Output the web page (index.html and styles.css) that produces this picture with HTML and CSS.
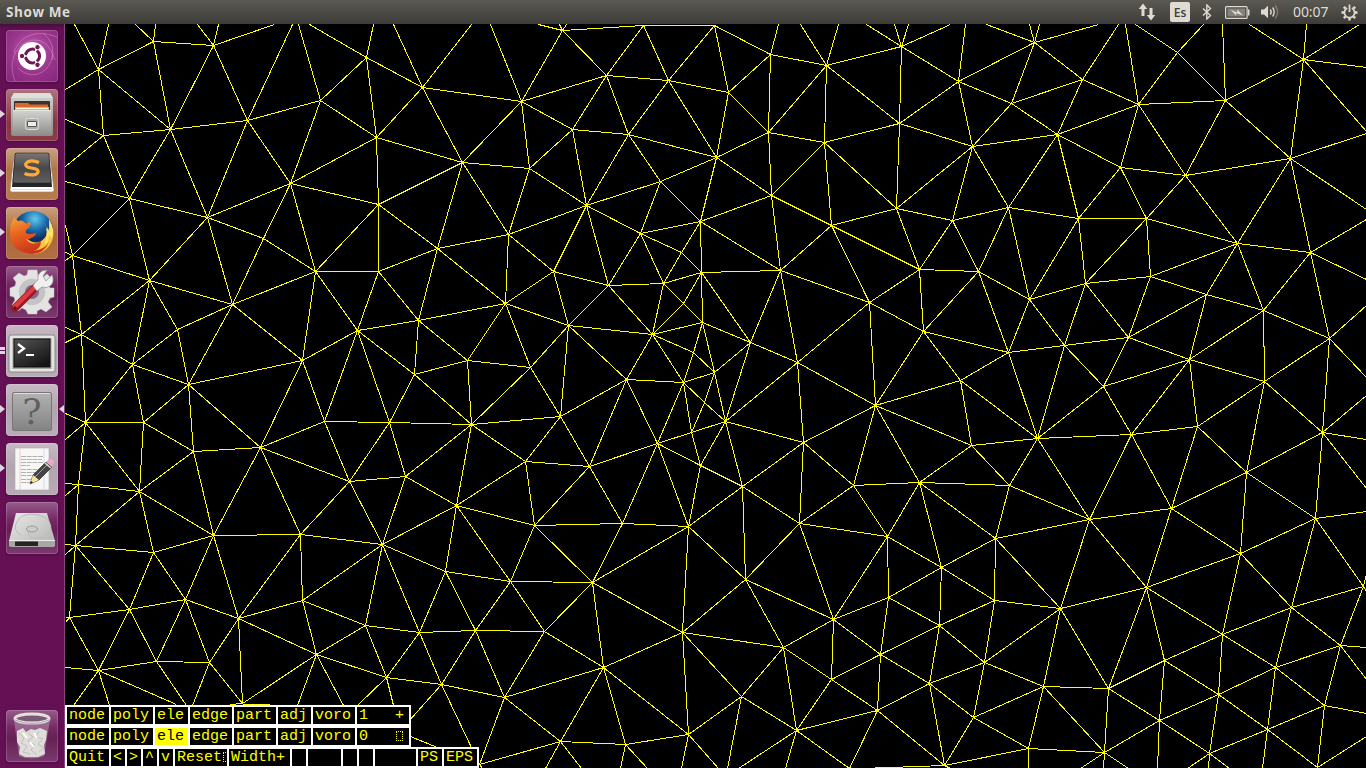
FILE: index.html
```html
<!DOCTYPE html>
<html lang="es">
<head>
<meta charset="utf-8">
<title>Show Me</title>
<link rel="stylesheet" href="styles.css">
</head>
<body>
<header class="panel">
  <span class="panel-title">Show Me</span>
  <div class="indicators">
    <svg class="ind-net" width="18" height="18" viewBox="0 0 18 18"><path d="M5 0.5L9.3 6H6.5V13H3.5V6H0.700Z M13 17.500L8.700 12H11.500V5H14.500V12H17.300Z"/></svg>
    <span class="ind-lang">Es</span>
    <svg class="ind-bt" width="10" height="16" viewBox="0 0 10 16"><path class="line" d="M1 4.500L8.500 11.500L4.800 15V1L8.500 4.500L1 11.500"/></svg>
    <svg class="ind-bat" width="25" height="13" viewBox="0 0 25 13"><rect class="bat-body" x=".6" y=".6" width="21.500" height="11.800" rx="1"/><rect class="bat-fill" x="2.500" y="2.500" width="17.700" height="8"/><path d="M23 3.500h1.500v6H23Z M5.500 3.500L12 6.500L12.500 3.500L18 9.500L11.500 7.200L11 9.500Z"/></svg>
    <svg class="ind-vol" width="20" height="16" viewBox="0 0 20 16"><path d="M1 5.500H4L8 1.800V14.200L4 10.500H1Z"/><path class="line" d="M10.300 5.500Q12 8 10.300 10.500M12.700 3.500Q15.700 8 12.700 12.500"/><path class="line faint" d="M15.300 1.500Q20 8 15.300 14.500"/></svg>
    <span class="clock">00:07</span>
    <svg class="ind-gear" width="17" height="17" viewBox="0 0 17 17"><path class="line ring" d="M6.200 4A5.100 5.100 0 1 0 10.800 4M8.500 .5V8"/><path class="line teeth" d="M2.800 2.800L4.400 4.400M14.200 2.800L12.600 4.400M.5 8.500H3M14 8.500H16.500M2.800 14.200L4.400 12.600M14.200 14.200L12.600 12.600M8.500 14V16.500"/></svg>
  </div>
</header>
<main class="desktop">
  <nav class="launcher">
    <div class="tile tile-dash">
      <svg width="52" height="52" viewBox="0 0 52 52"><path class="swirl" d="M9 51C2 33 8 14 27 10Q42 8 49 30M51 7C28-2 12 8 8 23M12 38C24 50 43 46 47 24M37 3Q50 13 46 30"/><circle cx="26" cy="26" r="14" fill="#fff"/><circle cx="26.500" cy="26" r="7" fill="none" stroke="#6f1653" stroke-width="3.200"/><path d="M26.500 26L14 26M26.500 26L33 15M26.500 26L33 37" stroke="#fff" stroke-width="1.500"/><circle cx="26.500" cy="26" r="5.200" fill="#fff"/><g fill="#6f1653" stroke="#fff"><circle cx="16" cy="26" r="2.700"/><circle cx="31.500" cy="17.200" r="2.700"/><circle cx="31.500" cy="34.800" r="2.700"/></g></svg>
    </div>
    <div class="tile tile-files running">
      <svg width="52" height="52" viewBox="0 0 52 52"><defs><linearGradient id="steel" x2="0" y2="1"><stop stop-color="#d4d4d1"/><stop offset="1" stop-color="#8b8b88"/></linearGradient></defs><path d="M8 4H44L47 9V45Q47 47 45 47H7Q5 47 5 45V9Z" fill="url(#steel)"/><path d="M8 4H44L47 9H5Z" fill="#dededb"/><rect x="8" y="12" width="36" height="12" rx="1" fill="#3b322d"/><path d="M9 14H22L24 15.500H42V23H9Z" fill="#d8672b"/><path d="M9 18H43V23H9Z" fill="#f2b168"/><path d="M10 19.500H42" stroke="#fff4d6"/><path d="M7 21H45V47H7Z" fill="url(#steel)"/><path d="M7 21.500H45" stroke="#e3e3df"/><rect x="19.500" y="29.500" width="13" height="11" rx="2" fill="#aaa" stroke="#ddd"/><rect x="21.500" y="32.500" width="9" height="5" rx=".5" fill="#eee" stroke="#555"/></svg>
    </div>
    <div class="tile tile-sublime running">
      <svg width="52" height="52" viewBox="0 0 52 52"><defs><linearGradient id="key" x2="0" y2="1"><stop stop-color="#777"/><stop offset=".5" stop-color="#484848"/><stop offset="1" stop-color="#606060"/></linearGradient></defs><path d="M8 8H44L48 42Q48 44 46 44H6Q4 44 4 42Z" fill="#fff" stroke="#9b8774" stroke-width=".7"/><path d="M9 5H43L46 39H6Z" fill="#252525"/><path d="M11 5H42Q43 5 43 7L45 33Q45 35 43 35H9Q7 35 7 33L9 7Q9 5 11 5Z" fill="url(#key)" stroke="#252525" stroke-width=".6"/><path d="M33 14.500Q26 11.500 21.500 14Q17.500 17 22 19.200L30 21Q34.500 23.500 30 26.200Q25 28 18.500 25.500" fill="none" stroke="#ffaa35" stroke-width="3.200"/><path d="M7 41.500H45" stroke="#ddd"/></svg>
    </div>
    <div class="tile tile-firefox running">
      <svg width="52" height="52" viewBox="0 0 52 52"><defs><radialGradient id="globe" cx=".55" cy=".2"><stop stop-color="#62c9ef"/><stop offset=".6" stop-color="#1766a5"/><stop offset="1" stop-color="#122d64"/></radialGradient><linearGradient id="fox" x2=".4" y2="1"><stop stop-color="#f5a737"/><stop offset=".45" stop-color="#e96420"/><stop offset="1" stop-color="#c9351b"/></linearGradient></defs><circle cx="27" cy="24" r="20" fill="url(#globe)"/><path d="M43 12Q50 24 46 34Q40 47 26 47Q13 47 7 36L20 31Q32 41 40 29Q43 20 38 16L43 23Z" fill="#f8c43c"/><path d="M8 10L12 14Q17 12 20 17Q23 14 25 16L23 21Q19 23 20 26Q23 28 30 26Q30 29 25 31Q23 33 20 32Q26 40 35 34Q35 42 27 44Q38 43 43 35Q38 47 26 47Q9 46 5 33Q2 21 8 10Z" fill="url(#fox)"/><path d="M43 13Q49 23 46 31L43 28L42 35L38 37Q42 28 40 21L44 25Z" fill="#ffe46c"/></svg>
    </div>
    <div class="tile tile-settings">
      <svg width="52" height="52" viewBox="0 0 52 52"><g fill="#e3e3e1" stroke="#c5c5c3" stroke-width=".5"><path d="M22 4H31L32 10L36 12L41 8L47 14L43 19L44 22H48V31L44 32L42 36L46 41L40 46L35 43L31 45V48H22L20 44L16 42L12 45L6 39L9 34L8 31L4 30V22L9 20L10 16L7 12L13 7L18 10L21 9Z"/><circle cx="26" cy="26" r="13" fill="#c4c3c5"/></g><circle cx="26" cy="26" r="7" fill="#8f638a"/><path d="M9 42L31 20" stroke="#9b1824" stroke-width="8" stroke-linecap="round"/><path d="M9 40.500L30 20" stroke="#df3c42" stroke-width="4.500" stroke-linecap="round"/><circle cx="9" cy="42" r="1.700" fill="#611"/><path d="M27 20Q29 15 32 14Q31 8 36 5L41 4L37 10L40 15L46 9Q49 16 44 20Q40 23 36 21L31 25Z" fill="#f0f0ee" stroke="#999" stroke-width=".8"/></svg>
    </div>
    <div class="tile tile-light running-two">
      <svg width="52" height="52" viewBox="0 0 52 52"><defs><linearGradient id="crt" x2=".7" y2="1"><stop stop-color="#555"/><stop offset="1" stop-color="#151515"/></linearGradient></defs><rect x="3" y="10" width="46" height="37" rx="2" fill="#e4e4e2" stroke="#888"/><rect x="6.500" y="13" width="39" height="31" fill="#a6a6a4"/><rect x="8" y="14" width="36" height="28" fill="url(#crt)" stroke="#111"/><path d="M12 19L18 23.500L12 28M20 30H28" fill="none" stroke="#fff" stroke-width="2.200"/></svg>
    </div>
    <div class="tile tile-light running focused">
      <svg width="52" height="52" viewBox="0 0 52 52"><defs><linearGradient id="unk" x2="0" y2="1"><stop stop-color="#b2b2b2"/><stop offset="1" stop-color="#838383"/></linearGradient></defs><rect x="6.500" y="8.500" width="39" height="38" rx="1.500" fill="url(#unk)" stroke="#777"/><path d="M8 9.500H44" stroke="#ddd"/><text class="question" x="26" y="39.500" text-anchor="middle">?</text></svg>
    </div>
    <div class="tile tile-light running">
      <svg width="52" height="52" viewBox="0 0 52 52"><rect x="9" y="5" width="34" height="42" fill="#f7f7f5" stroke="#aaa" stroke-width=".6"/><path d="M14 5V47" stroke="#eeb6b6" stroke-width=".7"/><path d="M38 5V47" stroke="#cbdcf5"/><path d="M15 13.500H37M15 16.500H36M15 19.500H37M15 22.500H24M15 26.500H35M15 29.500H32M15 32.500H33M15 36.500H29M15 39.500H25" stroke="#b2b2b2" stroke-dasharray="5 .7"/><path d="M24 41L27 32L40 19L46 24L33 37Z" fill="#444" stroke="#222" stroke-width=".6"/><path d="M29 34L42 21" stroke="#999"/><path d="M24 41L27 32L33 37Z" fill="#f2e29b"/><path d="M24 41L25 38L27 39.500Z" fill="#222"/><path d="M40 19L43 16Q46 15 48 18Q48 20 46 24Z" fill="#e9a7ca"/><path d="M39 20L45 25" stroke="#ddd" stroke-width="1.500"/></svg>
    </div>
    <div class="tile tile-plain">
      <svg width="52" height="52" viewBox="0 0 52 52"><defs><linearGradient id="disk" x2="1" y2="1"><stop stop-color="#e9e9e8"/><stop offset="1" stop-color="#b3b3b2"/></linearGradient></defs><path d="M10 11H41L49 39V44H3V39Z" fill="url(#disk)"/><path d="M3 39H49V43Q49 45 47 45H5Q3 45 3 43Z" fill="#a8a8a7"/><path d="M9 39.500H32V44H9Z" fill="#252525"/><path d="M3 38.500H49" stroke="#eee"/><path d="M15 33Q5 28 12 18Q18 10 33 13Q48 18 44 30Q39 37 27 36Q20 33 23 28" fill="none" stroke="#bbb"/><ellipse cx="26" cy="27" rx="5.500" ry="3" fill="#ccc" stroke="#999"/></svg>
    </div>
    <div class="tile tile-plain tile-trash">
      <svg width="52" height="52" viewBox="0 0 52 52"><path d="M8 10L13 46Q26 51 38 46L44 10Z" fill="#cbbbcb" opacity=".4"/><path d="M11 21L17 18L20 22L25 19L29 20L34 18L41 21L40 30L38 35L39 44L32 47H19L13 44L14 37L11 32Z" fill="#deddd9"/><path d="M13 23L18 28L15 33L21 36L17 42L24 44M22 23L27 27L22 31L29 35L25 40L31 45M33 21L30 27L37 29L32 34L38 38L33 42" fill="none" stroke="#bfbdb9"/><path d="M17 23L21 28M28 23L31 28M24 32L28 37" stroke="#fff" stroke-width="2"/><ellipse cx="26" cy="8.500" rx="17" ry="4.500" fill="#7b5874" stroke="#e1e1df" stroke-width="3"/><path d="M9 10Q26 17 43 10" fill="none" stroke="#aaa"/></svg>
    </div>
  </nav>
  <section class="stage">
    <svg class="mesh" width="1301" height="744" viewBox="65 24 1301 744"><path id="mesh-lines"/></svg>
    <div class="controls">
      <div class="row">
        <span class="cell w4">node</span><span class="cell w4">poly</span><span class="cell w3">ele</span><span class="cell w4">edge</span><span class="cell w4">part</span><span class="cell w3">adj</span><span class="cell w4">voro</span><span class="cell w5">1   +</span>
      </div>
      <div class="row">
        <span class="cell w4">node</span><span class="cell w4">poly</span><span class="cell w3 on">ele</span><span class="cell w4">edge</span><span class="cell w4">part</span><span class="cell w3">adj</span><span class="cell w4">voro</span><span class="cell w5">0   <i class="nochar"></i></span>
      </div>
      <div class="row">
        <span class="cell w4">Quit</span><span class="cell w1">&lt;</span><span class="cell w1">&gt;</span><span class="cell w1">^</span><span class="cell w1">v</span><span class="cell w5">Reset<i class="nochar"></i></span><span class="cell w6">Width+</span><span class="cell w1"></span><span class="cell w3"></span><span class="cell w1"></span><span class="cell w1"></span><span class="cell wide"></span><span class="cell w2">PS</span><span class="cell w3">EPS</span>
      </div>
    </div>
  </section>
</main>
<script src="mesh.js"></script>
</body>
</html>
```

FILE: styles.css
```css
* { box-sizing: border-box; }
body {
  margin: 0;
  width: 1366px;
  height: 768px;
  display: flex;
  flex-direction: column;
  overflow: hidden;
  background: #000;
  font-family: "Open Sans", "Noto Sans", sans-serif;
}
svg { display: block; }

.panel {
  height: 24px;
  flex: none;
  display: flex;
  align-items: center;
  justify-content: space-between;
  padding: 0 8px 0 6px;
  background: linear-gradient(#5b5952, #3d3c38);
  color: #dfdbd2;
}
.panel-title { font: bold 13.500px/24px "Open Sans", sans-serif; letter-spacing: .6px; }
.indicators { display: flex; align-items: center; height: 24px; }
.indicators svg { fill: #dfdbd2; }
.indicators .line { fill: none; stroke: #dfdbd2; stroke-width: 1.400; }
.indicators .faint { opacity: .35; }
.indicators .ring { stroke-width: 1.700; }
.indicators .teeth { stroke-width: 2.400; }
.bat-body { fill: none; stroke: #dfdbd2; stroke-width: 1.200; }
.bat-fill { fill: #85837d; }
.ind-lang {
  width: 20px;
  height: 20px;
  margin: 0 12px 0 14px;
  border-radius: 2px;
  background: #dfdbd2;
  color: #3d3c38;
  font-size: 12px;
  font-weight: 600;
  line-height: 21px;
  text-align: center;
}
.ind-bat { margin-left: 13px; }
.ind-vol { margin-left: 10px; }
.clock { margin: 0 12px 0 13px; font: 14px/24px "Noto Sans", sans-serif; width: 36px; letter-spacing: -.1px; white-space: nowrap; }

.desktop { flex: 1; display: flex; min-height: 0; }
.launcher {
  width: 65px;
  flex: none;
  display: flex;
  flex-direction: column;
  gap: 7px;
  padding: 6px 0 6px 6px;
  background: linear-gradient(#4b0c3c, #651055 6px, #651055);
  border-right: 1px solid #87457a;
}
.tile {
  position: relative;
  width: 52px;
  height: 52px;
  border-radius: 4px;
  box-shadow: inset 0 0 0 1px rgba(255,255,255,.17), 0 1px 3px rgba(30,0,25,.35);
}
.tile-dash { background: radial-gradient(circle at 50% 40%, #c45bae, #97358a 55%, #84267a); }
.swirl { fill: none; stroke: #e2a8d8; stroke-width: .8; opacity: .5; }
.tile-files { background: linear-gradient(#ae7380, #873640 65%, #8d3b4a); }
.tile-sublime { background: linear-gradient(#c9a085, #b27644 40%, #b67b49); }
.tile-firefox { background: linear-gradient(#c9a07c, #ad693c 50%, #b16e43); }
.tile-settings, .tile-plain { background: linear-gradient(#965b8a, #742864 35%, #672054 55%, #7b3a6e); }
.tile-light { background: linear-gradient(#c7bac5, #b2a5b0 45%, #b9abb6); }
.tile-trash { margin-top: auto; }
.question { font: 36px "DejaVu Serif", serif; fill: #606060; }
.running::before, .running-two::before, .running-two::after, .focused::after {
  content: "";
  position: absolute;
  border: solid transparent;
}
.running::before { left: -6px; top: 21px; border-width: 4px 0 4px 5px; border-left-color: #ddd6dc; }
.running-two::before, .running-two::after { left: -6px; width: 5px; height: 3px; border: 0; background: #ddd6dc; }
.running-two::before { top: 22px; }
.running-two::after { top: 26px; }
.focused::after { right: -6px; top: 21px; border-width: 4px 5px 4px 0; border-right-color: #ddd6dc; }

.stage { position: relative; flex: 1; background: #000; }
.mesh path { fill: none; stroke: #ff0; stroke-width: 1; shape-rendering: crispEdges; }
.controls {
  position: absolute;
  left: 0;
  bottom: 0;
  display: flex;
  flex-direction: column;
  align-items: flex-start;
}
.row { display: flex; gap: 2px; height: 21px; padding: 2px; background: #fff; }
.cell {
  height: 17px;
  padding-left: 2px;
  overflow: hidden;
  background: #000;
  color: #ff0;
  font: 15px/17px "Liberation Mono", monospace;
  white-space: pre;
}
.on { background: #ff0; color: #000; }
.w1 { width: 14px; }
.w2 { width: 24px; }
.w3 { width: 33px; }
.w4 { width: 42px; }
.w5 { width: 52px; }
.w6 { width: 61px; }
.wide { width: 41px; }
.nochar { display: inline-block; width: 7px; height: 10px; margin-left: 1px; border: 1px dotted #ff0; vertical-align: -1px; }
```

FILE: mesh.js
```js
// Mesh nodes as x,y pairs.
const nodes = `98,69 153,41 213,45 103,135 170,129 247,120 320,100 366,57 422,87 376,137 462,162 290,183 207,217 129,198
378,204 263,238 315,271 378,271 437,248 72,255 149,280 232,304 177,329 81,334 132,364 188,384 302,360 357,330 418,320
505,303 467,360 414,374 562,30 643,25 714,25 606,75 668,80 728,92 770,54 826,65 901,46 521,101 572,129 628,134 768,132
824,142 899,123 529,168 716,157 660,181 586,205 771,195 831,225 896,208 700,221 640,233 508,234 553,271 608,285 681,252
701,272 663,283 683,303 780,270 869,302 919,269 923,331 568,325 652,334 702,322 750,342 797,362 693,352 714,372 683,382
704,402
626,379 530,367 875,405 958,81 1034,42 1011,103 1082,79 1138,104 1177,52 1225,100 1303,59 972,146 1057,134 1120,167
1185,175 1290,158 952,220 1008,207 1078,218 1146,218 1237,243 1310,252 978,271 1029,299 1085,283 1150,276 1206,294
1263,310 1329,338 1008,352 1064,345 1128,337 1189,359 1264,381 960,380 1103,386 85,422 143,422 193,451 260,447 324,421
389,422 471,424 349,481 405,476 78,484 139,491 456,505 213,535 300,534 382,544 75,545 153,552 445,571 129,609 185,599
302,600 69,617 238,618 365,625 419,632 475,630 98,670 156,661 209,662 316,654 386,677 441,684 504,697 242,703 560,416
525,461 589,466 657,443 691,432 725,421 803,442 700,465 742,486 853,485 919,482 534,525 622,523 688,526 799,523 887,536
510,581 592,582 745,579 833,619 888,597 544,631 682,632 783,647 880,654 603,667 741,696 831,679 929,683 877,710 796,730
688,734 625,744 560,741 971,445 1037,438 1131,434 1197,426 1322,432 1009,485 1246,472 1089,519 1171,508 995,538 1315,518
941,567 1240,553 994,600 1060,608 1146,587 1363,586 1291,607 939,625 1222,634 984,662 1164,660 1340,645 1275,667
1043,686 1108,688 1218,694 1324,705 973,717 1159,720 1267,729 1028,748 1104,752 1209,753 1317,767 944,765 479,764`
  .trim().split(/\s+/).map(p => p.split(",").map(Number));

// Edges that leave the visible window: x1,y1,x2,y2.
const clipped = `98,69,74,24 98,69,108,24 153,41,135,24 153,41,155,24 213,45,197,24 213,45,218,24 213,45,274,24
247,120,292,24 320,100,298,24 366,57,309,24 366,57,373,24 422,87,393,24 422,87,471,24 521,101,490,24 562,30,538,24
562,30,559,24 562,30,566,24 562,30,643,25 643,25,714,25 770,54,778,24 826,65,800,24 826,65,838,24 901,46,866,24
901,46,894,24 901,46,908,24 901,46,950,24 958,81,965,24 1034,42,986,24 1034,42,1029,24 1034,42,1039,24
1034,42,1098,24 1082,79,1118,24 1138,104,1125,24 1177,52,1135,24 1177,52,1203,24 1225,100,1222,24 1303,59,1249,24
1303,59,1306,24 1303,59,1359,24 1303,59,1366,67 1303,59,1366,131 1290,158,1366,133 1290,158,1366,209
1310,252,1366,219 1310,252,1366,279 1329,338,1366,305 1329,338,1366,377 1322,432,1366,395 1322,432,1366,439
1322,432,1366,488 1315,518,1366,511 1363,586,1366,573 1363,586,1366,591 1340,645,1366,647 1340,645,1366,679
1324,705,1366,713 1317,767,1366,736 1267,729,1262,768 1209,753,1187,768 1209,753,1208,768 1209,753,1229,768
1159,720,1157,768 1104,752,1080,768 1104,752,1103,768 1104,752,1128,768 1028,748,1028,768 944,765,861,768
944,765,950,768 877,710,944,765 796,730,738,768 796,730,785,768 796,730,849,768 877,710,849,768 741,696,727,768
688,734,681,768 688,734,718,768 625,744,620,768 625,744,647,768 560,741,545,768 560,741,581,768 560,741,479,764
504,697,479,764 441,684,479,764 479,764,482,768 441,684,400,730 400,732,479,764 386,677,357,705 386,677,393,705
316,654,297,705 316,654,343,705 242,703,230,704 242,704,269,704 209,662,192,705 156,661,186,705 98,670,176,704
98,670,73,705 98,670,109,705 98,670,65,667 69,617,65,617 69,617,65,622 75,545,65,544 75,545,65,554 78,484,65,483
78,484,65,495 85,422,65,413 85,422,65,439 81,334,65,327 81,334,65,342 72,255,65,225 72,255,65,252 72,255,65,260
129,198,65,181 103,135,65,119 103,135,65,166 98,69,65,89`
  .trim().split(/\s+/).map(s => s.split(",").map(Number));

// Hull edges closed only by nodes beyond the window.
const outside = ["213,45,320,100", "688,734,796,730", "1082,79,1177,52", "1104,752,1209,753"];

function circle(a, b, c) {
  const d = 2 * (a[0] * (b[1] - c[1]) + b[0] * (c[1] - a[1]) + c[0] * (a[1] - b[1]));
  const s = p => p[0] * p[0] + p[1] * p[1];
  const x = (s(a) * (b[1] - c[1]) + s(b) * (c[1] - a[1]) + s(c) * (a[1] - b[1])) / d;
  const y = (s(a) * (c[0] - b[0]) + s(b) * (a[0] - c[0]) + s(c) * (b[0] - a[0])) / d;
  return { v: [a, b, c], x, y, r: Math.hypot(a[0] - x, a[1] - y) };
}

const edgeKey = (a, b) => [a, b].sort((p, q) => p[0] - q[0] || p[1] - q[1]).join(",");

// Incremental Delaunay triangulation.
let tris = [circle([-9000, -9001], [9500, -8800], [300, 9900])];
for (const p of nodes) {
  const border = new Map();
  tris = tris.filter(t => {
    if (Math.hypot(p[0] - t.x, p[1] - t.y) >= t.r) return true;
    for (let i = 0; i < 3; i++) {
      const e = [t.v[i], t.v[(i + 1) % 3]];
      const k = edgeKey(...e);
      if (border.has(k)) border.delete(k); else border.set(k, e);
    }
    return false;
  });
  for (const [a, b] of border.values()) tris.push(circle(a, b, p));
}

const edges = new Set(clipped.map(e => e.join(",")));
const maxRadius = 62;
for (const t of tris) {
  if (t.r > maxRadius) continue;
  for (let i = 0; i < 3; i++) edges.add(edgeKey(t.v[i], t.v[(i + 1) % 3]));
}
outside.forEach(k => edges.delete(k));
document.getElementById("mesh-lines").setAttribute("d", [...edges].map(k => {
  const [a, b, c, d] = k.split(",").map(v => Number(v) + 0.5);
  return `M${a} ${b}L${c} ${d}`;
}).join(""));
```
